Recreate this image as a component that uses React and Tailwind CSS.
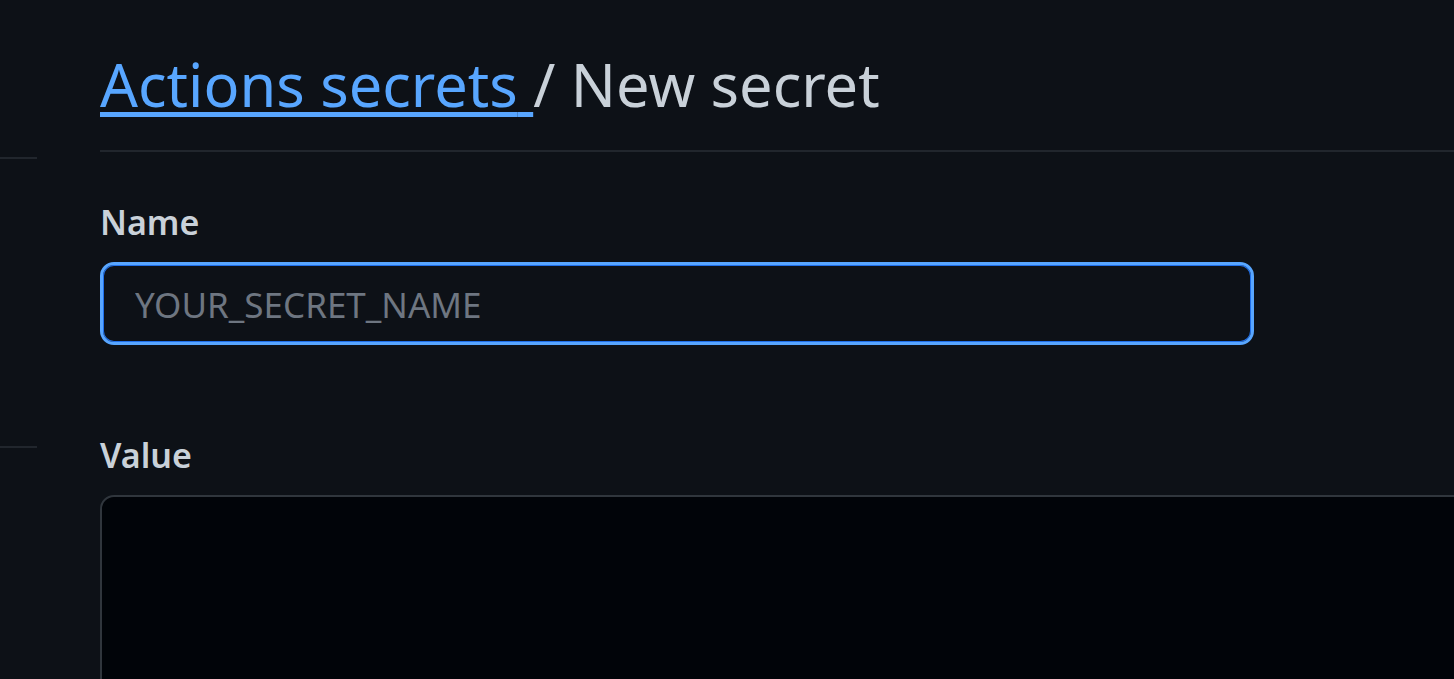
export default function App() {
  return (
    <div
      className="h-[679px] w-full overflow-hidden bg-[#0d1117] flex"
      style={{ fontFamily: '"Noto Sans", "Open Sans", sans-serif' }}
    >
      {/* Sidebar edge */}
      <div className="w-[37px] shrink-0 pt-[157px]">
        <div className="h-[2px] bg-[#21262d]" />
        <div className="h-[287px]" />
        <div className="h-[2px] bg-[#21262d]" />
      </div>

      {/* Main */}
      <div className="ml-[63px] flex-1 min-w-0">
        <div className="pt-[46px] pb-[28px] border-b-2 border-[#21262d]">
          <h2 className="text-[59.5px] leading-[76px] font-normal text-[#c9d1d9] whitespace-nowrap">
            <a className="text-[#58a6ff] underline decoration-[5px] underline-offset-[5px]">
              Actions secrets{" "}
            </a>
            / New secret
          </h2>
        </div>

        <div className="pt-[46px]">
          <label className="block text-[34px] font-semibold text-[#c9d1d9] leading-[48px]">
            Name
          </label>
          <input
            type="text"
            placeholder="YOUR_SECRET_NAME"
            className="mt-[16px] w-[1154px] h-[83px] rounded-[14px] border-[3px] border-[#58a6ff] shadow-[inset_0_0_0_1px_#1f6feb] bg-[#0d1117] px-[32px] pt-[2px] text-[35px] text-[#c9d1d9] placeholder:text-[#6e7681] outline-none"
          />
        </div>

        <div className="pt-[86px]">
          <label className="block text-[34px] font-semibold text-[#c9d1d9] leading-[48px]">
            Value
          </label>
          <textarea className="mt-[16px] w-[1420px] h-[300px] rounded-[14px] border-2 border-[#30363d] bg-[#010409] resize-none outline-none" />
        </div>
      </div>
    </div>
  );
}
